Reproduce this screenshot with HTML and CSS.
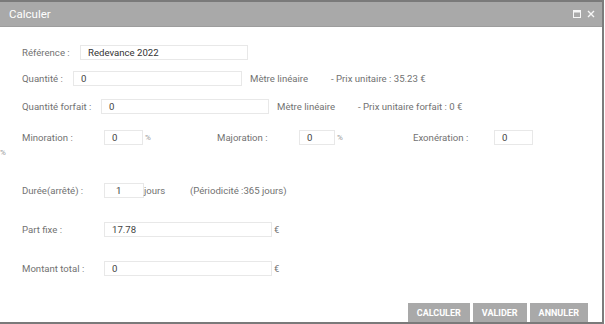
FILE: index.html
```html
<!DOCTYPE html>
<html lang="fr">
<head>
<meta charset="utf-8">
<title>Calculer</title>
<link rel="stylesheet" href="styles.css">
</head>
<body>
<div class="dialog">
  <div class="titlebar">
    <span class="title">Calculer</span>
    <div class="win-icons">
      <svg class="ico" width="8" height="8" viewBox="0 0 8 8"><rect x="0.5" y="0.5" width="7" height="7" fill="none" stroke="#fff" stroke-width="1"/><rect x="0.5" y="0.5" width="7" height="2" fill="#fff"/></svg>
      <svg class="ico" width="8" height="8" viewBox="0 0 8 8"><path d="M1 1L7 7M7 1L1 7" stroke="#fff" stroke-width="1.4"/></svg>
    </div>
  </div>
  <div class="content">
    <div class="row r1">
      <span class="lbl w58">Référence :</span>
      <span class="field w168">Redevance 2022</span>
    </div>
    <div class="row r2">
      <span class="lbl w51">Quantité :</span>
      <span class="field w169">0</span>
      <span class="unit u8">Mètre linéaire</span>
      <span class="note">- Prix unitaire : 35.23 €</span>
    </div>
    <div class="row r3">
      <span class="lbl w79">Quantité forfait :</span>
      <span class="field w168">0</span>
      <span class="unit u8">Mètre linéaire</span>
      <span class="note">- Prix unitaire forfait : 0 €</span>
    </div>
    <div class="row r4">
      <span class="lbl w82">Minoration :</span>
      <span class="field w39">0</span>
      <span class="pct w74">%</span>
      <span class="lbl w82">Majoration :</span>
      <span class="field w37">0</span>
      <span class="pct w77">%</span>
      <span class="lbl w81">Exonération :</span>
      <span class="field w39">0</span>
    </div>
    <div class="stray">%</div>
    <div class="row r5">
      <span class="lbl w82">Durée(arrêté) :</span>
      <span class="field w40">1</span>
      <span class="unit w46">jours</span>
      <span class="unit">(Périodicité :365 jours)</span>
    </div>
    <div class="row r6">
      <span class="lbl w82">Part fixe :</span>
      <span class="field w168">17.78</span>
      <span class="unit u2">€</span>
    </div>
    <div class="row r7">
      <span class="lbl w82">Montant total :</span>
      <span class="field w168">0</span>
      <span class="unit u2">€</span>
    </div>
    <div class="actions">
      <button class="btn">CALCULER</button>
      <button class="btn">VALIDER</button>
      <button class="btn">ANNULER</button>
    </div>
  </div>
  <div class="bottom-line"></div>
</div>
</body>
</html>
```

FILE: styles.css
```css
* { box-sizing: border-box; }
html, body { margin: 0; padding: 0; background: #fff; }
body {
  font-family: Roboto, "Liberation Sans", Arial, sans-serif;
  font-size: 9.6px;
  color: #727272;
  width: 605px;
  height: 324px;
  overflow: hidden;
}
.dialog {
  width: 604px;
  border-right: 2px solid #7c7c7c;
  display: flex;
  flex-direction: column;
  height: 324px;
}
.titlebar {
  height: 27px;
  background: #a9a9a9;
  border-top: 2px solid #7a7a7a;
  border-bottom: 1px solid #9d9d9d;
  display: flex;
  align-items: center;
  justify-content: space-between;
  padding: 0 7px 0 9px;
}
.title {
  color: #fff;
  font-size: 11.5px;
}
.win-icons {
  display: flex;
  gap: 6px;
  align-items: center;
}
.ico { display: block; opacity: 0.9; }
.content {
  flex: 1;
  display: flex;
  flex-direction: column;
  padding-top: 18px;
}
.row {
  display: flex;
  align-items: center;
  height: 15px;
  padding-left: 22px;
  white-space: nowrap;
}
.r2 { margin-top: 11px; }
.r3 { margin-top: 13px; }
.r4 { margin-top: 16px; }
.r5 { margin-top: 24px; }
.r6 { margin-top: 24px; }
.r7 { margin-top: 24px; }
.stray {
  height: 12px;
  line-height: 12px;
  font-size: 8px;
  color: #999;
  margin-top: 2px;
}
.lbl { flex: none; }
.field {
  flex: none;
  height: 15px;
  border: 1px solid #e8e8e8;
  color: #444;
  padding-left: 7px;
  line-height: 13px;
  background: #fff;
}
.pct { flex: none; font-size: 8px; color: #999; padding-left: 2px; }
.unit { flex: none; }
.u8 { margin-left: 8px; width: 81px; }
.u2 { margin-left: 2px; }
.note { flex: none; }
.w37 { width: 36px; }
.w39 { width: 39px; }
.w40 { width: 40px; padding-left: 11px; }
.w46 { width: 46px; }
.w51 { width: 51px; }
.w58 { width: 58px; }
.w74 { width: 74px; }
.w77 { width: 78px; }
.w79 { width: 79px; }
.w81 { width: 81px; }
.w82 { width: 82px; }
.w168 { width: 168px; }
.w169 { width: 169px; }
.r1 .field { color: #333; }
.actions {
  margin-top: auto;
  display: flex;
  justify-content: flex-end;
  gap: 3px;
  padding-right: 14px;
}
.btn {
  font-family: Roboto, "Liberation Sans", Arial, sans-serif;
  font-weight: bold;
  font-size: 9px;
  color: #fff;
  background: #a9a9a9;
  border: none;
  height: 19px;
  padding: 0 9px;
  margin: 0;
}
.bottom-line {
  height: 2px;
  background: #7a7a7a;
  flex: none;
}
```
